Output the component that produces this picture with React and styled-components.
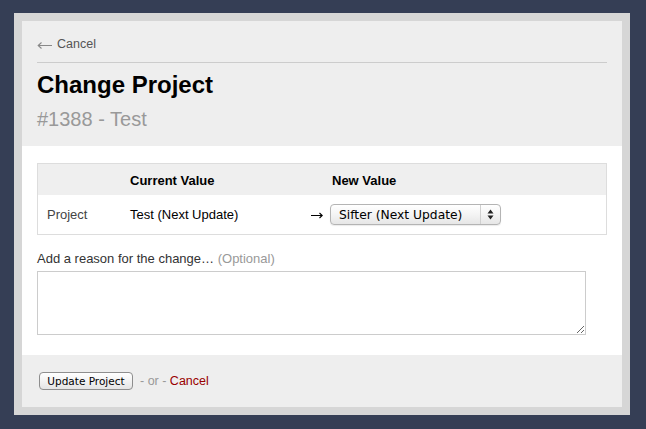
import React, { useState } from 'react'
import styled, { createGlobalStyle } from 'styled-components'

const GlobalStyle = createGlobalStyle`
    html, body {
        margin: 0;
        padding: 0;
        background-color: #353e55;
        height: 100%;
    }
    body {
        font-family: "Liberation Sans", Arial, Helvetica, sans-serif;
        color: #000;
    }
`

const Page = styled.div`
    padding: 13px 0 14px 14px;
`

const Frame = styled.div`
    width: 600px;
    border: 8px solid #d6d6d6;
    background-color: #eeeeee;
`

const Header = styled.div`
    padding: 16px 15px 15px 15px;
`

const BackLink = styled.a`
    display: flex;
    align-items: center;
    padding-bottom: 10px;
    border-bottom: 1px solid #cccccc;
    font-size: 12.5px;
    line-height: 15px;
    color: #555;
    text-decoration: none;
    cursor: pointer;
`

const BackArrow = styled.svg`
    margin: 1px 5px 0 0;
`

const Title = styled.h1`
    margin: 8px 0 0 0;
    font-size: 24px;
    line-height: 28px;
    font-weight: bold;
    color: #000;
`

const Subtitle = styled.h2`
    margin: 8px 0 0 0;
    font-size: 20px;
    line-height: 24px;
    font-weight: normal;
    color: #999;
`

const Body = styled.div`
    background-color: #fff;
    padding: 17px 15px 20px 15px;
`

const Table = styled.div`
    display: grid;
    grid-template-columns: 92px 179px 21px 1fr;
    border: 1px solid #dddddd;
    font-size: 13px;
    line-height: 16px;
`

const HeadCell = styled.div`
    background-color: #efefef;
    padding: 9px 0 6px ${(props) => props.indent || 0}px;
    font-weight: bold;
    color: #000;
`

const Cell = styled.div`
    display: flex;
    align-items: center;
    height: 39px;
    padding-left: ${(props) => props.indent || 0}px;
    color: ${(props) => props.muted ? '#444' : '#000'};
`

const Arrow = styled.svg`
    margin: 1px 0 0 2px;
`

const SelectWrap = styled.div`
    position: relative;
    width: 171px;
    height: 21px;
`

const Select = styled.select`
    appearance: none;
    -webkit-appearance: none;
    width: 100%;
    height: 100%;
    margin: 0;
    padding: 0 24px 0 8px;
    border: 1px solid #b4b4b4;
    border-radius: 4px;
    background: linear-gradient(#ffffff, #f4f4f4 50%, #e6e6e6);
    box-shadow: 0 1px 1px rgba(0, 0, 0, 0.08);
    font-family: "DejaVu Sans", "Lucida Grande", sans-serif;
    font-size: 12.3px;
    color: #000;
    outline: none;
`

const SelectArrows = styled.span`
    position: absolute;
    top: 1px;
    right: 1px;
    bottom: 1px;
    width: 19px;
    border-left: 1px solid #d0d0d0;
    display: flex;
    align-items: center;
    justify-content: center;
    pointer-events: none;
`

const Label = styled.label`
    display: block;
    margin-top: 16px;
    font-size: 13px;
    line-height: 16px;
    color: #333;
`

const Optional = styled.span`
    color: #999;
`

const Reason = styled.textarea`
    display: block;
    box-sizing: border-box;
    margin-top: 4px;
    width: 549px;
    height: 64px;
    border: 1px solid #cccccc;
    padding: 4px;
    font-family: "Liberation Sans", Arial, sans-serif;
    font-size: 13px;
    outline: none;
`

const Footer = styled.div`
    display: flex;
    align-items: center;
    height: 52px;
    padding: 0 17px;
    font-size: 12.5px;
`

const Button = styled.button`
    box-sizing: border-box;
    height: 18px;
    width: 94px;
    padding: 0;
    border: 1px solid #8e8e8e;
    border-radius: 4px;
    background: linear-gradient(#ffffff, #f3f3f3 50%, #e4e4e4);
    font-family: "DejaVu Sans", "Lucida Grande", sans-serif;
    font-size: 10.5px;
    line-height: 16px;
    color: #000;
    cursor: pointer;
`

const Or = styled.span`
    color: #999;
    margin-left: 7px;
    white-space: pre;
`

const CancelLink = styled.a`
    color: #990000;
    text-decoration: none;
    cursor: pointer;
`

function UpDown () {
    return (
        <svg width="7" height="11" viewBox="0 0 7 11">
            <path d="M3.5 0.5 L6.5 4.5 L0.5 4.5 Z" fill="#222" />
            <path d="M3.5 10.5 L6.5 6.5 L0.5 6.5 Z" fill="#222" />
        </svg>
    )
}

const projects = ['Sifter (Next Update)', 'Test (Next Update)']

function App () {
    const [project, setProject] = useState(projects[0])
    const [reason, setReason] = useState('')

    return (
        <Page>
            <GlobalStyle />
            <Frame>
                <Header>
                    <BackLink>
                        <BackArrow width="15" height="9" viewBox="0 0 15 9">
                            <path d="M15 4.5 H1.5 M4.5 1.5 L1.2 4.5 L4.5 7.5" stroke="#888" strokeWidth="1.1" fill="none" />
                        </BackArrow>
                        Cancel
                    </BackLink>
                    <Title>Change Project</Title>
                    <Subtitle>#1388 - Test</Subtitle>
                </Header>
                <Body>
                    <Table>
                        <HeadCell />
                        <HeadCell>Current Value</HeadCell>
                        <HeadCell />
                        <HeadCell indent={2}>New Value</HeadCell>

                        <Cell indent={9} muted>Project</Cell>
                        <Cell>Test (Next Update)</Cell>
                        <Cell>
                            <Arrow width="12" height="7" viewBox="0 0 12 7">
                                <path d="M0 3.5 H11 M8.5 1 L11.2 3.5 L8.5 6" stroke="#000" strokeWidth="1.1" fill="none" />
                            </Arrow>
                        </Cell>
                        <Cell>
                            <SelectWrap>
                                <Select value={project} onChange={(e) => setProject(e.target.value)}>
                                    {projects.map((p) => <option key={p}>{p}</option>)}
                                </Select>
                                <SelectArrows><UpDown /></SelectArrows>
                            </SelectWrap>
                        </Cell>
                    </Table>
                    <Label htmlFor="reason">Add a reason for the change… <Optional>(Optional)</Optional></Label>
                    <Reason id="reason" value={reason} onChange={(e) => setReason(e.target.value)} />
                </Body>
                <Footer>
                    <Button>Update Project</Button>
                    <Or>- or - </Or>
                    <CancelLink>Cancel</CancelLink>
                </Footer>
            </Frame>
        </Page>
    )
}

export default App
